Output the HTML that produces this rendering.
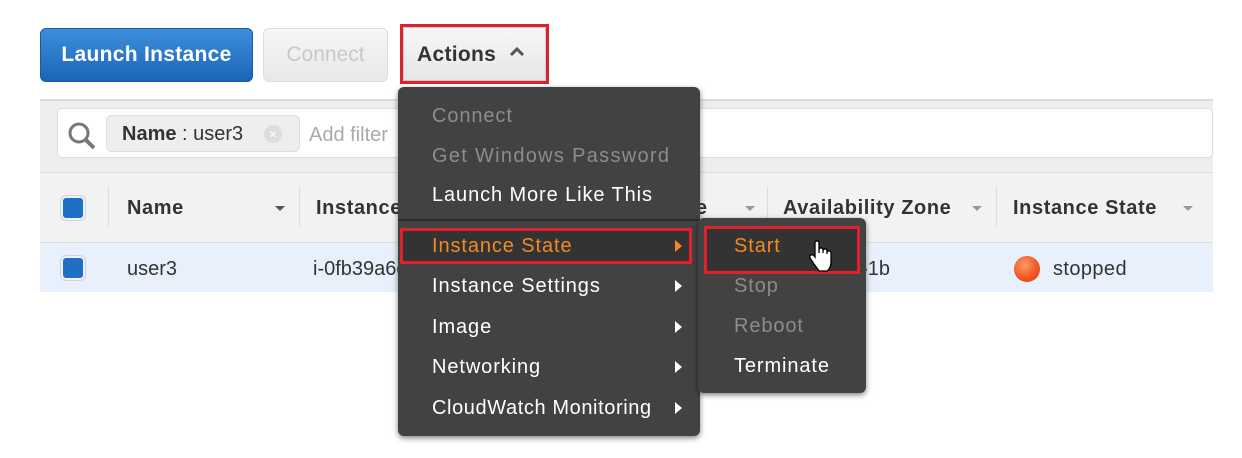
<!DOCTYPE html>
<html><head><meta charset="utf-8"><style>
*{margin:0;padding:0;box-sizing:border-box}
body{width:1242px;height:458px;background:#fff;position:relative;overflow:hidden;font-family:"Liberation Sans",sans-serif}
.a{position:absolute;white-space:nowrap}
.t{font-size:20px;line-height:24px}
.menu{background:#424242;border-radius:6px;box-shadow:0 2px 6px rgba(0,0,0,.5)}
.mi{color:#fff;font-size:20px;line-height:24px;letter-spacing:0.9px}
.dis{color:#8c8c8c}
.arr{width:0;height:0;border-left:7px solid #fff;border-top:6px solid transparent;border-bottom:6px solid transparent}
.red{border:3px solid #e0202a}
.hd{color:#333;font-weight:bold;font-size:20px;letter-spacing:0.6px}
.cb{width:24px;height:24px;background:#1f6fc5;border-radius:5px;border:2px solid #eef2f6;box-shadow:0 0 0 1px #d0d4d8}
.dd{width:0;height:0;border-top:5px solid #999;border-left:5px solid transparent;border-right:5px solid transparent}
</style></head><body>
<div class="a" style="left:40px;top:28px;width:213px;height:54px;border-radius:6px;background:linear-gradient(#3d8fdc,#1b64b8);border:1px solid #1a5aa5"></div>
<div class="a t" style="left:40px;top:43px;width:213px;text-align:center;color:#fff;font-weight:bold;font-size:21px;letter-spacing:0.3px">Launch Instance</div>
<div class="a" style="left:263px;top:28px;width:125px;height:54px;border-radius:6px;background:linear-gradient(#f6f6f6,#e8e8e8);border:1px solid #ddd"></div>
<div class="a t" style="left:263px;top:43px;width:125px;text-align:center;color:#c8c8c8;font-size:21px">Connect</div>
<div class="a" style="left:403px;top:27px;width:143px;height:54px;background:linear-gradient(#f7f7f7,#e6e6e6);border:1px solid #ccc"></div>
<div class="a red" style="left:400px;top:24px;width:149px;height:60px"></div>
<div class="a t" style="left:417px;top:43px;color:#333;font-weight:bold;font-size:21px;letter-spacing:0.3px">Actions</div>
<svg class="a" style="left:509px;top:46px" width="16" height="12"><path d="M2 9 L8 3 L14 9" stroke="#555" stroke-width="3" fill="none"/></svg>
<div class="a" style="left:40px;top:99px;width:1173px;height:73px;background:#eeeeee;border-top:2px solid #ddd"></div>
<div class="a" style="left:57px;top:108px;width:1156px;height:50px;background:#fff;border:1px solid #ddd;border-radius:5px"></div>
<svg class="a" style="left:66px;top:120px" width="34" height="34"><circle cx="13" cy="13" r="9" stroke="#777" stroke-width="3" fill="none"/><path d="M19 19 L28 28" stroke="#777" stroke-width="4"/></svg>
<div class="a" style="left:106px;top:115px;width:194px;height:37px;background:#eee;border:1px solid #ddd;border-radius:6px"></div>
<div class="a t" style="left:122px;top:122px;color:#333"><b>Name</b> : user3</div>
<div class="a" style="left:264px;top:125px;width:18px;height:18px;border-radius:50%;background:#ddd;color:#fff;font-size:14px;line-height:18px;text-align:center">×</div>
<div class="a t" style="left:309px;top:123px;color:#aaa">Add filter</div>
<div class="a" style="left:40px;top:172px;width:1173px;height:71px;background:#f2f2f2;border-top:1px solid #ddd;border-bottom:1px solid #ddd"></div>
<div class="a cb" style="left:61px;top:196px"></div>
<div class="a" style="left:108px;top:187px;width:1px;height:40px;background:#ddd"></div>
<div class="a hd" style="left:127px;top:197px">Name</div>
<div class="a dd" style="left:275px;top:206px;border-top-color:#555"></div>
<div class="a" style="left:299px;top:187px;width:1px;height:40px;background:#ddd"></div>
<div class="a hd" style="left:316px;top:197px">Instance ID</div>
<div class="a hd" style="left:660px;top:197px">Type</div>
<div class="a dd" style="left:745px;top:206px"></div>
<div class="a" style="left:767px;top:187px;width:1px;height:40px;background:#ddd"></div>
<div class="a hd" style="left:783px;top:197px">Availability Zone</div>
<div class="a dd" style="left:972px;top:206px"></div>
<div class="a" style="left:996px;top:187px;width:1px;height:40px;background:#ddd"></div>
<div class="a hd" style="left:1013px;top:197px">Instance State</div>
<div class="a dd" style="left:1183px;top:206px"></div>
<div class="a" style="left:40px;top:243px;width:1173px;height:49px;background:#e8f1fb"></div>
<div class="a cb" style="left:61px;top:256px"></div>
<div class="a t" style="left:127px;top:257px;color:#333">user3</div>
<div class="a t" style="left:313px;top:257px;color:#333">i-0fb39a6c</div>
<div class="a t" style="left:850px;top:257px;color:#333">2-1b</div>
<div class="a" style="left:1014px;top:256px;width:26px;height:26px;border-radius:50%;background:radial-gradient(circle at 40% 35%,#ff9a6a,#f0521f 60%,#d83d10)"></div>
<div class="a t" style="left:1053px;top:257px;color:#333;letter-spacing:0.4px">stopped</div>
<div class="a menu" style="left:398px;top:87px;width:302px;height:349px"></div>
<div class="a mi dis" style="left:432px;top:104px">Connect</div>
<div class="a mi dis" style="left:432px;top:144px;letter-spacing:1.3px">Get Windows Password</div>
<div class="a mi" style="left:432px;top:183px">Launch More Like This</div>
<div class="a" style="left:398px;top:219px;width:302px;height:2px;background:#2e2e2e"></div>
<div class="a" style="left:403px;top:231px;width:286px;height:30px;background:#333"></div>
<div class="a red" style="left:400px;top:228px;width:292px;height:36px"></div>
<div class="a mi" style="left:432px;top:234px;color:#f08a24">Instance State</div>
<div class="a arr" style="left:675px;top:240px;border-left-color:#f08a24"></div>
<div class="a mi" style="left:432px;top:274px">Instance Settings</div>
<div class="a arr" style="left:675px;top:280px"></div>
<div class="a mi" style="left:432px;top:315px">Image</div>
<div class="a arr" style="left:675px;top:321px"></div>
<div class="a mi" style="left:432px;top:355px">Networking</div>
<div class="a arr" style="left:675px;top:361px"></div>
<div class="a mi" style="left:432px;top:396px;letter-spacing:0.6px">CloudWatch Monitoring</div>
<div class="a arr" style="left:675px;top:402px"></div>
<div class="a menu" style="left:698px;top:218px;width:168px;height:175px"></div>
<div class="a" style="left:707px;top:229px;width:150px;height:42px;background:#333"></div>
<div class="a red" style="left:704px;top:226px;width:156px;height:48px"></div>
<div class="a mi" style="left:734px;top:234px;color:#f08a24">Start</div>
<svg class="a" style="left:808px;top:240px" width="26" height="34" viewBox="0 0 26 34"><path d="M7 3 Q7 1 9 1 Q11 1 11 3 L11 13 L11 10 Q11 8 13 8 Q15 8 15 10 L15 13 L15 11 Q15 9 17 9 Q19 9 19 11 L19 14 L19 13 Q19 11 21 11 Q23 11 23 13 L23 22 Q23 28 19 31 L11 31 Q9 28 6 24 L2 18 Q1 16 3 15 Q5 14 7 17 Z" fill="#fff" stroke="#000" stroke-width="1.3"/></svg>
<div class="a mi dis" style="left:734px;top:274px">Stop</div>
<div class="a mi dis" style="left:734px;top:314px">Reboot</div>
<div class="a mi" style="left:734px;top:354px">Terminate</div>
</body></html>
